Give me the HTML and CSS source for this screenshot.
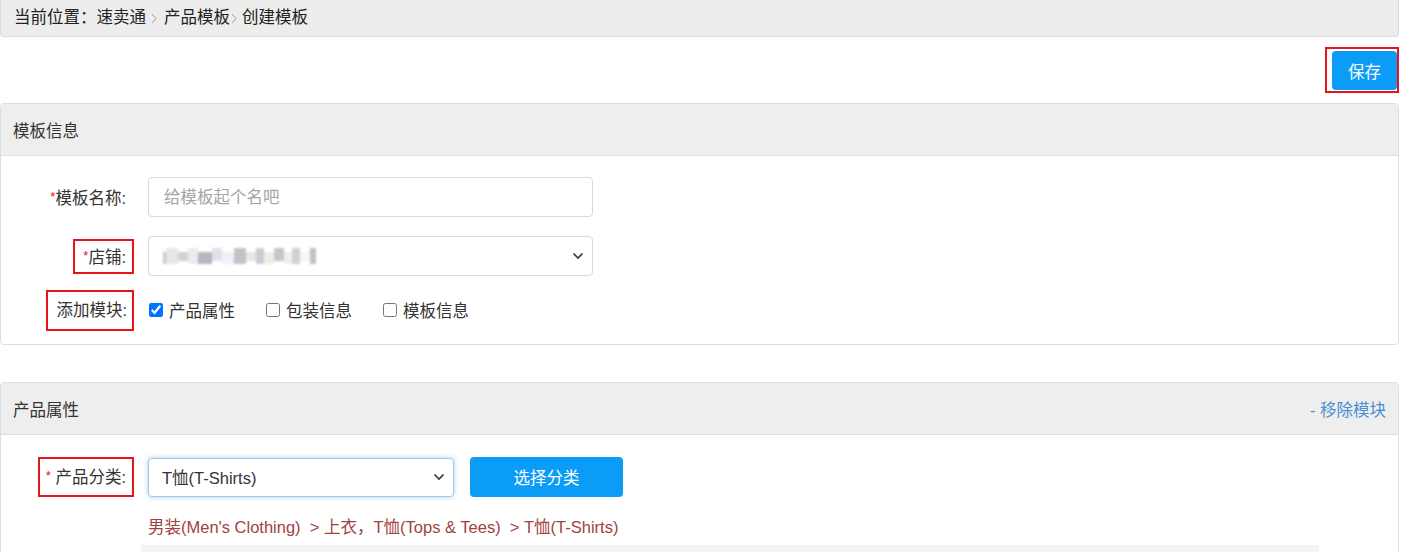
FILE: index.html
```html
<!DOCTYPE html>
<html lang="zh-CN">
<head>
    <meta charset="UTF-8">
    <title>创建模板</title>
    <link rel="stylesheet" href="styles.css">
</head>
<body>
<div class="page">

    <div class="crumb">
        当前位置：速卖通<svg class="sep" width="6" height="11" viewBox="0 0 6 11"><path d="M1 1l4 4.5L1 10" fill="none" stroke="#a0a0a0" stroke-width="1"/></svg>产品模板<svg class="sep sep-tight" width="6" height="11" viewBox="0 0 6 11"><path d="M1 1l4 4.5L1 10" fill="none" stroke="#a0a0a0" stroke-width="1"/></svg>创建模板
    </div>

    <div class="toolbar">
        <span class="mark mark-btn"><button class="btn btn-save">保存</button></span>
    </div>

    <!-- 模板信息 -->
    <div class="panel">
        <div class="panel-head">模板信息</div>
        <div class="panel-body">
            <div class="row">
                <div class="label"><span class="label-text"><i class="req">*</i>模板名称:</span></div>
                <input class="field field-wide" type="text" placeholder="给模板起个名吧">
            </div>
            <div class="row">
                <div class="label"><span class="label-text mark"><i class="req">*</i>店铺:</span></div>
                <div class="field field-wide select">
                    <span class="blurred">
                        <b style="width:3px;background:#c9c9c9"></b><b style="width:12px;background:#e4e6ea"></b><b style="width:10px;background:#cfd3d8"></b><b style="width:10px;background:#e9ecf0"></b><b style="width:14px;background:#b4b7bc"></b><b style="width:10px;background:#dfe3e8"></b><b style="width:12px;background:#eef1f5"></b><b style="width:12px;background:#c0c3c8"></b><b style="width:10px;background:#e3e6ea"></b><b style="width:8px;background:#c9ccd0"></b><b style="width:10px;background:#f0ede6"></b><b style="width:10px;background:#c4c6c9"></b><b style="width:8px;background:#eceef0"></b><b style="width:8px;background:#cfd1d4"></b><b style="width:10px;background:#f6f6f6"></b><b style="width:6px;background:#bfc1c4"></b>
                    </span>
                    <svg class="caret" width="12" height="8" viewBox="0 0 12 8"><path d="M1.5 1.5L6 6l4.5-4.5" fill="none" stroke="#333" stroke-width="1.6"/></svg>
                </div>
            </div>
            <div class="row row-short">
                <div class="label"><span class="label-text mark mark-tall">添加模块:</span></div>
                <div class="checks">
                    <label class="check"><input type="checkbox" checked>产品属性</label>
                    <label class="check"><input type="checkbox">包装信息</label>
                    <label class="check"><input type="checkbox">模板信息</label>
                </div>
            </div>
        </div>
    </div>

    <!-- 产品属性 -->
    <div class="panel panel-open">
        <div class="panel-head">
            产品属性
            <a class="remove" href="#">- 移除模块</a>
        </div>
        <div class="panel-body">
            <div class="row">
                <div class="label"><span class="label-text mark mark-cat"><i class="req">*</i> 产品分类:</span></div>
                <div class="field field-cat select focus">
                    <span>T恤(T-Shirts)</span>
                    <svg class="caret" width="12" height="8" viewBox="0 0 12 8"><path d="M1.5 1.5L6 6l4.5-4.5" fill="none" stroke="#333" stroke-width="1.6"/></svg>
                </div>
                <button class="btn btn-pick">选择分类</button>
            </div>
            <p class="cat-path">男装(Men's Clothing)&nbsp; &gt; 上衣，T恤(Tops &amp; Tees)&nbsp; &gt; T恤(T-Shirts)</p>
            <div class="attr-box"></div>
        </div>
    </div>

</div>
</body>
</html>
```

FILE: styles.css
```css
*{
    margin: 0;
    padding: 0;
    box-sizing: border-box;
}

body{
    font-family: "Liberation Sans", "Noto Sans CJK SC", sans-serif;
    font-size: 16.5px;
    color: #333;
    background: #fff;
}

.page{
    padding-right: 3px;
}

.crumb{
    height: 37px;
    line-height: 34px;
    padding-left: 13px;
    background-color: #ededed;
    border: 1px solid #dcdcdc;
    border-top: none;
    border-radius: 0 0 4px 4px;
    color: #222;
}

.sep{
    margin: 0 7px 0 5px;
    vertical-align: -1px;
}

.sep-tight{
    margin: 0 5px 0 1px;
}

.toolbar{
    height: 66px;
    display: flex;
    justify-content: flex-end;
    align-items: center;
}

.mark{
    border: 2px solid #e5141c;
}

.mark-btn{
    display: inline-block;
    padding: 2px 0 1px 5px;
}

.btn{
    border: none;
    border-radius: 4px;
    background-color: #0a9cf6;
    color: #fff;
    font-family: inherit;
    font-size: 16.5px;
}

.btn-save{
    display: block;
    width: 65px;
    height: 39px;
}

.panel{
    border: 1px solid #dedede;
    border-radius: 4px;
    margin-bottom: 37px;
}

.panel-head{
    height: 52px;
    padding: 0 12px;
    background-color: #eeeeee;
    border-bottom: 1px solid #dedede;
    border-radius: 4px 4px 0 0;
    display: flex;
    align-items: center;
    justify-content: space-between;
    color: #333;
}

.remove{
    color: #4a8ed2;
    text-decoration: none;
}

.panel-body{
    padding: 21px 0 19px;
}

.panel-open .panel-body{
    padding-top: 22px;
    padding-bottom: 0;
}

.row{
    display: flex;
    align-items: center;
    margin-bottom: 19px;
}

.row-short{
    height: 30px;
    margin-bottom: 0;
}

.label{
    width: 135px;
    text-align: right;
    flex-shrink: 0;
    padding-right: 2px;
}

.label-text{
    display: inline-block;
    line-height: 20px;
    padding: 5px 6px 5px 8px;
    border: 2px solid transparent;
}

.label-text.mark{
    border-color: #e5141c;
}

.mark-tall{
    padding: 8px 5px 9px 8px;
}

.mark-cat{
    padding: 7px 6px 8px 6px;
}

.req{
    font-style: normal;
    color: #e5141c;
    font-size: 13px;
    vertical-align: 3px;
}

.field{
    margin-left: 12px;
    height: 40px;
    border: 1px solid #d9d9d9;
    border-radius: 4px;
    font-family: inherit;
    font-size: 16.5px;
    color: #333;
    background: #fff;
}

input.field{
    padding: 0 15px;
    outline: none;
}

input.field::placeholder{
    color: #a5a5a5;
}

.field-wide{
    width: 445px;
}

.select{
    display: flex;
    align-items: center;
    justify-content: space-between;
    padding: 0 8px 0 14px;
}

.blurred{
    display: flex;
    height: 16px;
    align-items: stretch;
    filter: blur(0.8px);
}

.blurred b{
    display: block;
}

.blurred b:nth-child(odd){
    margin-top: 4px;
}

.blurred b:nth-child(3n){
    margin-bottom: 3px;
}

.checks{
    margin-left: 12px;
    display: flex;
    align-items: center;
}

.check{
    display: flex;
    align-items: center;
    margin-right: 30px;
    color: #333;
}

.check input{
    width: 14px;
    height: 14px;
    margin: 0 6px 0 1px;
}

.field-cat{
    width: 306px;
    height: 39px;
    padding-left: 13px;
}

.focus{
    border-color: #9ecaf0;
    box-shadow: 0 0 5px rgba(102, 175, 233, 0.6);
}

.btn-pick{
    margin-left: 16px;
    width: 153px;
    height: 40px;
}

.cat-path{
    margin: 20px 0 0 147px;
    line-height: 20px;
    color: #a0433f;
}

.attr-box{
    margin: 8px 0 0 140px;
    width: 1178px;
    height: 10px;
    background: #f4f4f4;
}
```
